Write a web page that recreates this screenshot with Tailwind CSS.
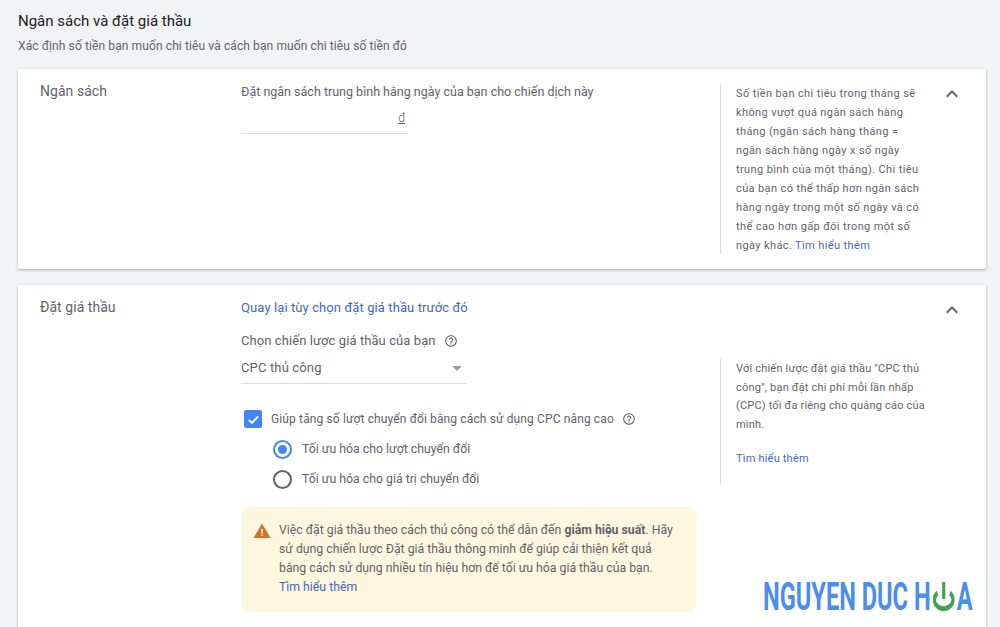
<!DOCTYPE html>
<html lang="en">
  <head>
    <meta charset="UTF-8" />
    <script src="https://cdn.jsdelivr.net/npm/@tailwindcss/browser@4"></script>
    <title>Ngân sách và đặt giá thầu</title>
  </head>
  <body class="bg-[#f1f3f4] font-[Roboto,sans-serif] h-[627px] overflow-hidden relative text-[#5f6368]">
    <!-- HEADER -->
    <div class="pl-[18px] pt-[12px] h-[69px]">
      <h1 class="text-[15px] leading-[18px] text-[#202124]">Ngân sách và đặt giá thầu</h1>
      <p class="text-[12px] leading-[16px] mt-[8px] tracking-[0.11px]">Xác định số tiền bạn muốn chi tiêu và cách bạn muốn chi tiêu số tiền đó</p>
    </div>

    <!-- BUDGET CARD -->
    <section class="ml-[18px] w-[968px] h-[200px] bg-white rounded-[2px] shadow-[0_1px_3px_rgba(60,64,67,0.4)] flex">
      <h2 class="w-[223px] pl-[22px] pt-[13px] text-[14px] leading-[18px] tracking-[0.05px] shrink-0">Ngân sách</h2>
      <div class="w-[479px] pt-[15px] shrink-0">
        <p class="text-[12.5px] leading-[16px]">Đặt ngân sách trung bình hằng ngày của bạn cho chiến dịch này</p>
        <div class="w-[167px] h-[34px] border-b border-[#dadce0] flex justify-end items-center pr-[3px] pt-[2px] text-[12px] font-light"><span class="underline">đ</span></div>
      </div>
      <div class="w-[206px] shrink-0 mt-[14px] h-[171px] border-l border-[#dadce0] pl-[15px] pt-[1px] text-[11px] leading-[19px] tracking-[0.38px]">
        Số tiền bạn chi tiêu trong tháng sẽ không vượt quá ngân sách hàng tháng (ngân sách hàng tháng = ngân sách hàng ngày x số ngày trung bình của một tháng). Chi tiêu của bạn có thể thấp hơn ngân sách hàng ngày trong một số ngày và có thể cao hơn gấp đôi trong một số ngày khác. <a class="text-[#4268c4]">Tìm hiểu thêm</a>
      </div>
      <div class="pl-[14px] pt-[13px]">
        <svg class="w-[24px] h-[24px]" viewBox="0 0 24 24" fill="#5f6368"><path d="M12 8l-6 6 1.41 1.41L12 10.83l4.59 4.58L18 14z"/></svg>
      </div>
    </section>

    <!-- BIDDING CARD -->
    <section class="ml-[18px] mt-[16px] w-[968px] h-[360px] bg-white rounded-[2px] shadow-[0_1px_3px_rgba(60,64,67,0.4)] flex">
      <h2 class="w-[223px] pl-[22px] pt-[13px] text-[14px] leading-[18px] tracking-[0.05px] shrink-0">Đặt giá thầu</h2>
      <div class="w-[479px] pt-[15px] shrink-0">
        <a class="block text-[13px] leading-[16px] tracking-[0.1px] text-[#4268c4]">Quay lại tùy chọn đặt giá thầu trước đó</a>
        <div class="flex items-center gap-[8px] mt-[17px] text-[13px] leading-[16px] tracking-[0.08px]">
          <span>Chọn chiến lược giá thầu của bạn</span>
          <svg class="w-[14px] h-[14px]" viewBox="0 0 24 24" fill="#5f6368"><path d="M11 18h2v-2h-2v2zm1-16C6.48 2 2 6.48 2 12s4.48 10 10 10 10-4.48 10-10S17.52 2 12 2zm0 18c-4.41 0-8-3.59-8-8s3.59-8 8-8 8 3.59 8 8-3.59 8-8 8zm0-14c-2.21 0-4 1.79-4 4h2c0-1.1.9-2 2-2s2 .9 2 2c0 2-3 1.75-3 5h2c0-2.25 3-2.5 3-5 0-2.21-1.79-4-4-4z"/></svg>
        </div>
        <div class="w-[226px] h-[33px] mt-[2px] pt-[2px] border-b border-[#dadce0] flex items-center justify-between pr-[5px] text-[13px] tracking-[0.15px]">
          <span>CPC thủ công</span>
          <span class="w-0 h-0 border-x-[5px] border-x-transparent border-t-[5px] border-t-[#9aa0a6]"></span>
        </div>
        <div class="flex items-center mt-[23px] h-[24px] pl-[3px] text-[12px]">
          <span class="w-[18px] h-[18px] rounded-[2px] bg-[#4285f4] flex items-center justify-center shrink-0">
            <svg class="w-[15px] h-[15px]" viewBox="0 0 24 24" fill="none" stroke="white" stroke-width="3"><path d="M4.5 12.5l5 5 10-10.5"/></svg>
          </span>
          <span class="ml-[9px] tracking-[0.13px]">Giúp tăng số lượt chuyển đổi bằng cách sử dụng CPC nâng cao</span>
          <svg class="w-[14px] h-[14px] ml-[8px]" viewBox="0 0 24 24" fill="#5f6368"><path d="M11 18h2v-2h-2v2zm1-16C6.48 2 2 6.48 2 12s4.48 10 10 10 10-4.48 10-10S17.52 2 12 2zm0 18c-4.41 0-8-3.59-8-8s3.59-8 8-8 8 3.59 8 8-3.59 8-8 8zm0-14c-2.21 0-4 1.79-4 4h2c0-1.1.9-2 2-2s2 .9 2 2c0 2-3 1.75-3 5h2c0-2.25 3-2.5 3-5 0-2.21-1.79-4-4-4z"/></svg>
        </div>
        <div class="flex items-center mt-[6px] h-[24px] pl-[32px] text-[12.3px]">
          <span class="w-[19px] h-[19px] rounded-full border-2 border-[#4285f4] flex items-center justify-center shrink-0"><span class="w-[9px] h-[9px] rounded-full bg-[#4285f4]"></span></span>
          <span class="ml-[10px]">Tối ưu hóa cho lượt chuyển đổi</span>
        </div>
        <div class="flex items-center mt-[6px] h-[24px] pl-[32px] text-[12.3px]">
          <span class="w-[19px] h-[19px] rounded-full border-2 border-[#5f6368] shrink-0"></span>
          <span class="ml-[10px]">Tối ưu hóa cho giá trị chuyển đổi</span>
        </div>
        <div class="w-[456px] h-[105px] mt-[16px] bg-[#fef7e0] rounded-[8px] flex pl-[12px] pt-[14px] text-[12.25px] leading-[19px]">
          <svg class="w-[18px] h-[18px] shrink-0 mt-[1px]" viewBox="0 0 18 18"><path d="M9 1.5L.5 16h17z" fill="#d9701e"/><path d="M8.2 7h1.6v4.5H8.2zM8.2 12.5h1.6v1.6H8.2z" fill="#fef7e0"/></svg>
          <p class="ml-[8px] w-[400px]">Việc đặt giá thầu theo cách thủ công có thể dẫn đến <b class="font-bold">giảm hiệu suất</b>. Hãy sử dụng chiến lược Đặt giá thầu thông minh để giúp cải thiện kết quả bằng cách sử dụng nhiều tín hiệu hơn để tối ưu hóa giá thầu của bạn. <a class="block text-[#4268c4]">Tìm hiểu thêm</a></p>
        </div>
      </div>
      <div class="w-[206px] shrink-0 mt-[74px] h-[125px] border-l border-[#dadce0] pl-[15px] pt-[1px] text-[11px] leading-[18.7px] tracking-[0.2px]">
        <p>Với chiến lược đặt giá thầu "CPC thủ công", bạn đặt chi phí mỗi lần nhấp (CPC) tối đa riêng cho quảng cáo của mình.</p>
        <a class="block mt-[15px] text-[#4268c4]">Tìm hiểu thêm</a>
      </div>
      <div class="pl-[14px] pt-[13px]">
        <svg class="w-[24px] h-[24px]" viewBox="0 0 24 24" fill="#5f6368"><path d="M12 8l-6 6 1.41 1.41L12 10.83l4.59 4.58L18 14z"/></svg>
      </div>
    </section>

    <!-- WATERMARK -->
    <div class="absolute left-[763px] top-[579px] h-[36px] flex items-center text-[#4a8ded] font-bold text-[38px] leading-[36px] whitespace-nowrap origin-left scale-x-[0.621]">
      <span>NGUYEN DUC H</span>
      <svg class="w-[36px] h-[36px] mx-[3px]" viewBox="0 0 36 36" preserveAspectRatio="none" fill="none" stroke="#3fa34d" stroke-width="5"><path vector-effect="non-scaling-stroke" d="M8 14A15 9 0 1 0 28 14"/><path vector-effect="non-scaling-stroke" d="M18 3V20"/></svg>
      <span>A</span>
    </div>
  </body>
</html>
